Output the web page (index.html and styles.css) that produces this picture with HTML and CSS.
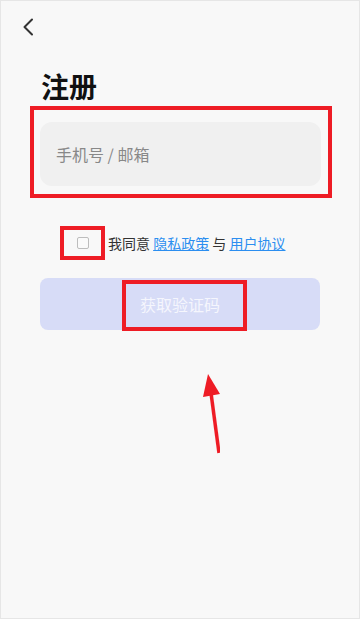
FILE: index.html
```html
<!DOCTYPE html>
<html lang="zh">
<head>
<meta charset="utf-8">
<link rel="stylesheet" href="styles.css">
</head>
<body>
<div class="page">
  <div class="topbar">
    <svg class="back" width="14" height="20" viewBox="0 0 14 20"><polyline points="10,2.5 2.5,10 10,17.5" fill="none" stroke="#333" stroke-width="2" stroke-linecap="round" stroke-linejoin="round"/></svg>
  </div>
  <h1 class="title">注册</h1>
  <div class="mark mark-field">
    <div class="input">手机号 / 邮箱</div>
  </div>
  <div class="agree">
    <div class="mark mark-check"><span class="checkbox"></span></div>
    <span class="agree-text">我同意 <a class="link">隐私政策</a> 与 <a class="link">用户协议</a></span>
  </div>
  <div class="btn">
    <span class="btn-text">获取验证码</span>
    <span class="mark-btn"></span>
  </div>
  <svg class="arrow" width="40" height="100" viewBox="0 0 40 100"><line x1="39" y1="80" x2="31" y2="20" stroke="#ee1c25" stroke-width="3.5"/><polygon points="28,1 23,24 40,21" fill="#ee1c25"/></svg>
</div>
</body>
</html>
```
FILE: styles.css
```css
html, body {
  margin: 0;
  padding: 0;
  background: #f8f8f8;
}
.page {
  position: relative;
  width: 360px;
  height: 619px;
  box-sizing: border-box;
  border: 1px solid #e6e6e6;
  background: #f8f8f8;
  font-family: "Noto Sans CJK SC", "Noto Sans", sans-serif;
  overflow: hidden;
}
.topbar {
  height: 50px;
  padding: 16px 0 0 21px;
  box-sizing: border-box;
}
.back {
  display: block;
}
.title {
  margin: 0 0 0 40px;
  padding-top: 9px;
  font-size: 28px;
  line-height: 52px;
  height: 46px;
  font-weight: 700;
  color: #111;
}
.mark {
  border: 4px solid #ee1c25;
  box-sizing: border-box;
}
.mark-field {
  margin-left: 29px;
  width: 302px;
  padding: 12px 7px 8px 6px;
}
.input {
  height: 64px;
  border-radius: 12px;
  background: #f0f0f0;
  display: flex;
  align-items: center;
  padding-left: 16px;
  font-size: 16px;
  color: #888;
}
.agree {
  display: flex;
  align-items: center;
  margin: 28px 0 0 59px;
}
.mark-check {
  width: 45px;
  height: 34px;
  display: flex;
  align-items: center;
  padding-left: 13px;
}
.checkbox {
  width: 10px;
  height: 10px;
  border: 1.5px solid #bdbdbd;
  border-radius: 2px;
  background: #fafafa;
}
.agree-text {
  margin-left: 3px;
  font-size: 14px;
  color: #333;
}
.link {
  color: #2b8ef0;
  text-decoration: underline;
}
.btn {
  position: relative;
  margin: 18px 0 0 39px;
  width: 280px;
  height: 52px;
  border-radius: 8px;
  background: #d7dcf7;
  display: flex;
  align-items: center;
  justify-content: center;
}
.btn-text {
  font-size: 16px;
  color: #f5f6fd;
}
.mark-btn {
  position: absolute;
  left: 82px;
  top: 2px;
  width: 125px;
  height: 51px;
  border: 4px solid #ee1c25;
  box-sizing: border-box;
}
.arrow {
  position: absolute;
  left: 179px;
  top: 372px;
}
```
